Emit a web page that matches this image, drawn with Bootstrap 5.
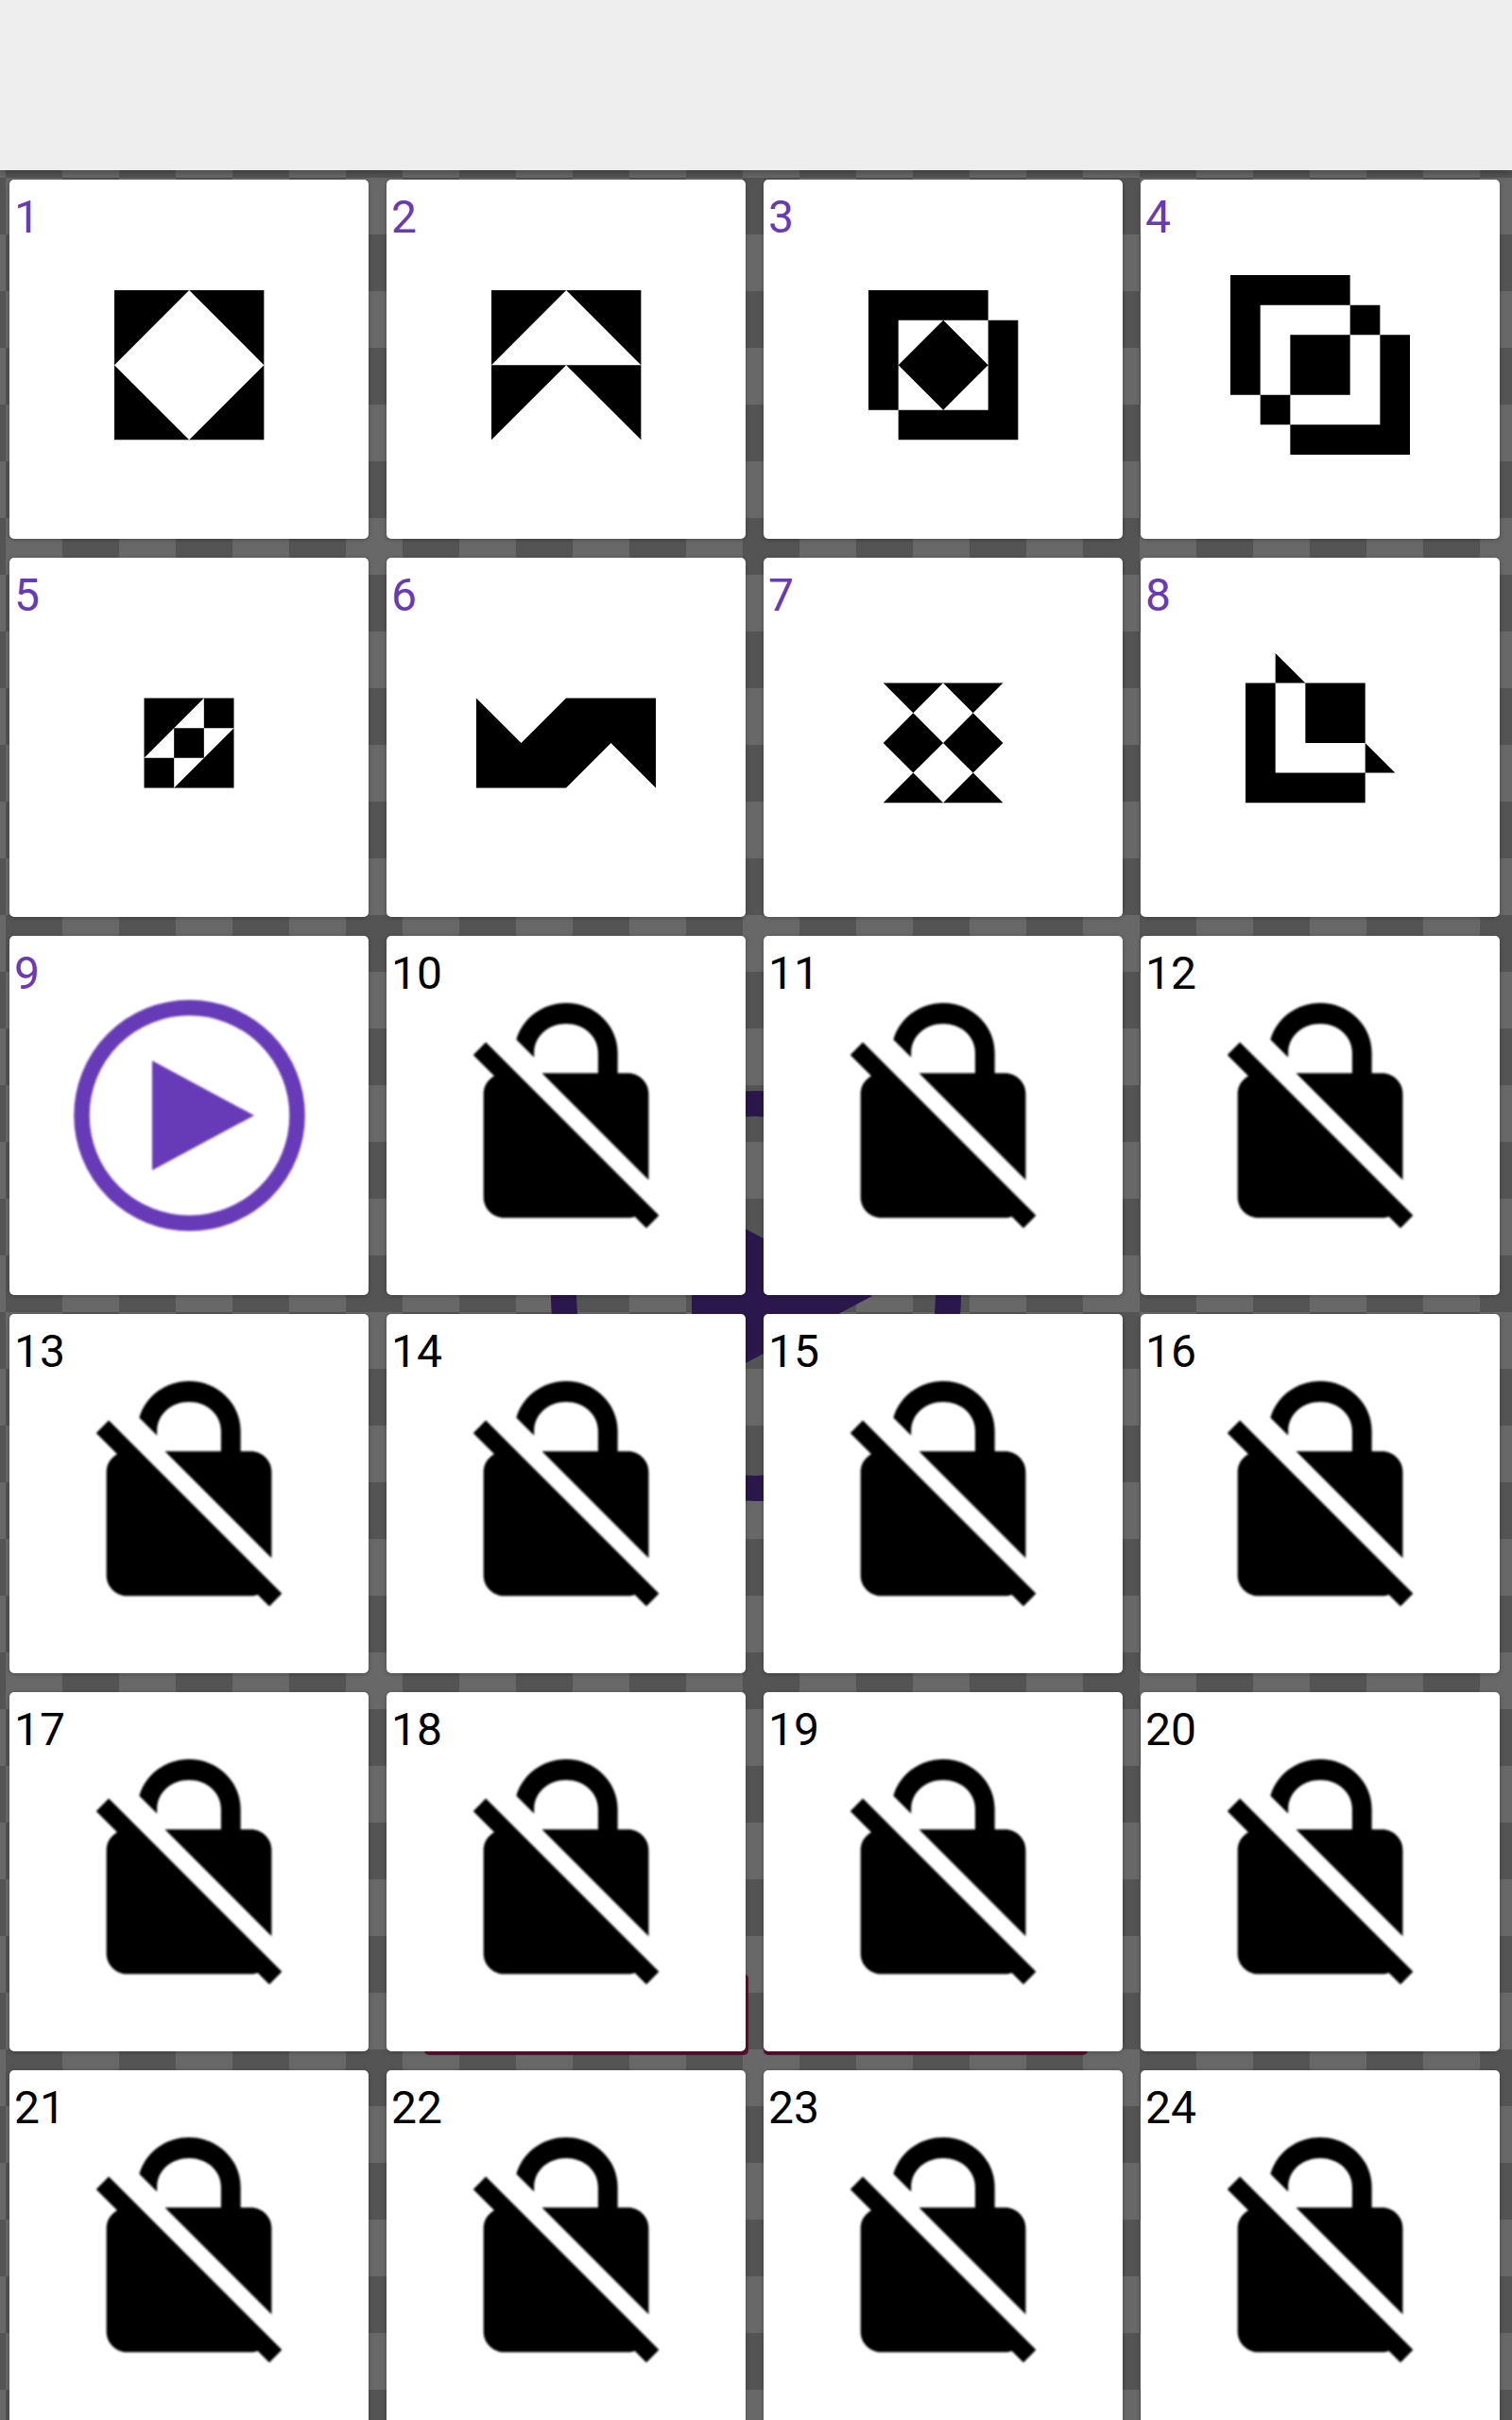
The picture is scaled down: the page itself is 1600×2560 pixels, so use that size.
<!doctype html>
<html lang="en">
<head>
<meta charset="utf-8">
<title>Levels</title>
<link href="https://cdn.jsdelivr.net/npm/bootstrap@5.3.0/dist/css/bootstrap.min.css" rel="stylesheet">
<style>
html, body { height: 2560px; overflow: hidden; }
body { background: #666; font-family: Roboto, "Liberation Sans", sans-serif; }
.top-strip { height: 180px; background: #eee; box-shadow: 0 3px 7px rgba(0,0,0,.28); z-index: 3; }
.stage {
  height: 2380px; overflow: hidden;
  background: repeating-conic-gradient(#545454 0 25%, #686868 0 50%) 6px 8px / 120px 120px;
}
.backdrop { top: 0; left: 0; width: 1600px; height: 2380px; }
.level-grid {
  display: grid; grid-template-columns: repeat(4, 380px); column-gap: 19px; row-gap: 20px;
  padding: 10px 0 0 10px; z-index: 1;
}
.tile { width: 380px; height: 380px; border: 0; border-radius: 5px; box-shadow: 0 1px 4px rgba(0,0,0,.3); }
.tile svg { width: 380px; height: 380px; display: block; }
.num { top: 13px; left: 5px; font-size: 48px; line-height: 54px; color: #000; }
.num-done { color: #673ab7; }
.tile svg.soft { filter: blur(1px); }
</style>
</head>
<body>
<svg width="0" height="0" class="position-absolute">
  <defs>
    <symbol id="lock" viewBox="0 0 380 380">
      <g transform="translate(59 58) scale(10.92)">
        <path d="M21 21.78L4.22 5 3 6.22l2.04 2.04C4.42 8.6 4 9.25 4 10v10c0 1.1.9 2 2 2h12c.23 0 .45-.05.66-.12L19.78 23 21 21.78zM8.9 6c0-1.6 1.39-2.8 3.1-2.8s3.1 1.2 3.1 2.8v2H9.66L20 18.34V10c0-1.1-.9-2-2-2h-1V6c0-2.66-2.24-4.82-5-4.82-2.32 0-4.26 1.53-4.82 3.56L8.9 6.46V6z"/>
      </g>
    </symbol>
  </defs>
</svg>

<header class="top-strip position-relative"></header>

<main class="stage position-relative">
  <svg class="backdrop position-absolute" viewBox="0 180 1600 2380">
    <circle cx="800" cy="1371" r="203.5" fill="none" stroke="#2a174c" stroke-width="27"/>
    <polygon points="732,1270 923,1371 732,1472" fill="#2a174c"/>
    <rect x="449" y="2088" width="343" height="86" rx="5" fill="#5a1030"/>
    <rect x="808" y="2088" width="343" height="86" rx="5" fill="#5a1030"/>
  </svg>

  <div class="level-grid position-relative">

    <div class="card tile position-relative"><span class="num num-done position-absolute">1</span>
      <svg viewBox="0 0 380 380"><g transform="translate(111 117) scale(31.67)"><path d="M0 0H2.5L0 2.5ZM2.5 0H5V2.5ZM0 2.5L2.5 5H0ZM5 2.5V5H2.5Z"/></g></svg></div>

    <div class="card tile position-relative"><span class="num num-done position-absolute">2</span>
      <svg viewBox="0 0 380 380"><g transform="translate(111 117) scale(31.67)"><path d="M0 0H2.5L0 2.5ZM2.5 0H5V2.5ZM0 2.5H2.5L0 5ZM2.5 2.5H5V5Z"/></g></svg></div>

    <div class="card tile position-relative"><span class="num num-done position-absolute">3</span>
      <svg viewBox="0 0 380 380"><g transform="translate(111 117) scale(31.67)"><path d="M0 0H4V1H1V4H0ZM4 1H5V5H1V4H4ZM2.5 1L4 2.5 2.5 4 1 2.5Z"/></g></svg></div>

    <div class="card tile position-relative"><span class="num num-done position-absolute">4</span>
      <svg viewBox="0 0 380 380"><g transform="translate(95 101) scale(31.67)"><path d="M0 0H4V1H1V4H0ZM4 1H5V2H4ZM2 2H4V4H2ZM1 4H2V5H1ZM5 2H6V6H2V5H5Z"/></g></svg></div>

    <div class="card tile position-relative"><span class="num num-done position-absolute">5</span>
      <svg viewBox="0 0 380 380"><g transform="translate(142.5 148.5) scale(31.67)"><path d="M0 0H2L0 2ZM2 0H3V1H2ZM1 1H2V2H1ZM0 2H1V3H0ZM3 1V3H1Z"/></g></svg></div>

    <div class="card tile position-relative"><span class="num num-done position-absolute">6</span>
      <svg viewBox="0 0 380 380"><g transform="translate(95 148.5) scale(31.67)"><path d="M0 0L1.5 1.5 3 0H6V3L4.5 1.5 3 3H0Z"/></g></svg></div>

    <div class="card tile position-relative"><span class="num num-done position-absolute">7</span>
      <svg viewBox="0 0 380 380"><g transform="translate(126.7 132.6) scale(31.67)"><path d="M0 0H2L1 1ZM2 0H4L3 1ZM1 1L2 2 1 3 0 2ZM3 1L4 2 3 3 2 2ZM1 3L2 4H0ZM3 3L4 4H2Z"/></g></svg></div>

    <div class="card tile position-relative"><span class="num num-done position-absolute">8</span>
      <svg viewBox="0 0 380 380"><g transform="translate(111 132.6) scale(31.67)"><path d="M1 -1L2 0H1ZM0 0H1V3H4V4H0ZM2 0H4V2H2ZM4 2L5 3H4Z"/></g></svg></div>

    <div class="card tile position-relative"><span class="num num-done position-absolute">9</span>
      <svg class="soft" viewBox="0 0 380 380"><g fill="#673ab7"><circle cx="190.5" cy="190" r="114" fill="none" stroke="#673ab7" stroke-width="16.5"/><polygon points="151,132 259,190 151,248"/></g></svg></div>

    <div class="card tile position-relative"><span class="num position-absolute">10</span><svg class="soft"><use href="#lock"/></svg></div>
    <div class="card tile position-relative"><span class="num position-absolute">11</span><svg class="soft"><use href="#lock"/></svg></div>
    <div class="card tile position-relative"><span class="num position-absolute">12</span><svg class="soft"><use href="#lock"/></svg></div>
    <div class="card tile position-relative"><span class="num position-absolute">13</span><svg class="soft"><use href="#lock"/></svg></div>
    <div class="card tile position-relative"><span class="num position-absolute">14</span><svg class="soft"><use href="#lock"/></svg></div>
    <div class="card tile position-relative"><span class="num position-absolute">15</span><svg class="soft"><use href="#lock"/></svg></div>
    <div class="card tile position-relative"><span class="num position-absolute">16</span><svg class="soft"><use href="#lock"/></svg></div>
    <div class="card tile position-relative"><span class="num position-absolute">17</span><svg class="soft"><use href="#lock"/></svg></div>
    <div class="card tile position-relative"><span class="num position-absolute">18</span><svg class="soft"><use href="#lock"/></svg></div>
    <div class="card tile position-relative"><span class="num position-absolute">19</span><svg class="soft"><use href="#lock"/></svg></div>
    <div class="card tile position-relative"><span class="num position-absolute">20</span><svg class="soft"><use href="#lock"/></svg></div>
    <div class="card tile position-relative"><span class="num position-absolute">21</span><svg class="soft"><use href="#lock"/></svg></div>
    <div class="card tile position-relative"><span class="num position-absolute">22</span><svg class="soft"><use href="#lock"/></svg></div>
    <div class="card tile position-relative"><span class="num position-absolute">23</span><svg class="soft"><use href="#lock"/></svg></div>
    <div class="card tile position-relative"><span class="num position-absolute">24</span><svg class="soft"><use href="#lock"/></svg></div>
  </div>
</main>
<script src="https://cdn.jsdelivr.net/npm/bootstrap@5.3.0/dist/js/bootstrap.bundle.min.js"></script>
</body>
</html>
